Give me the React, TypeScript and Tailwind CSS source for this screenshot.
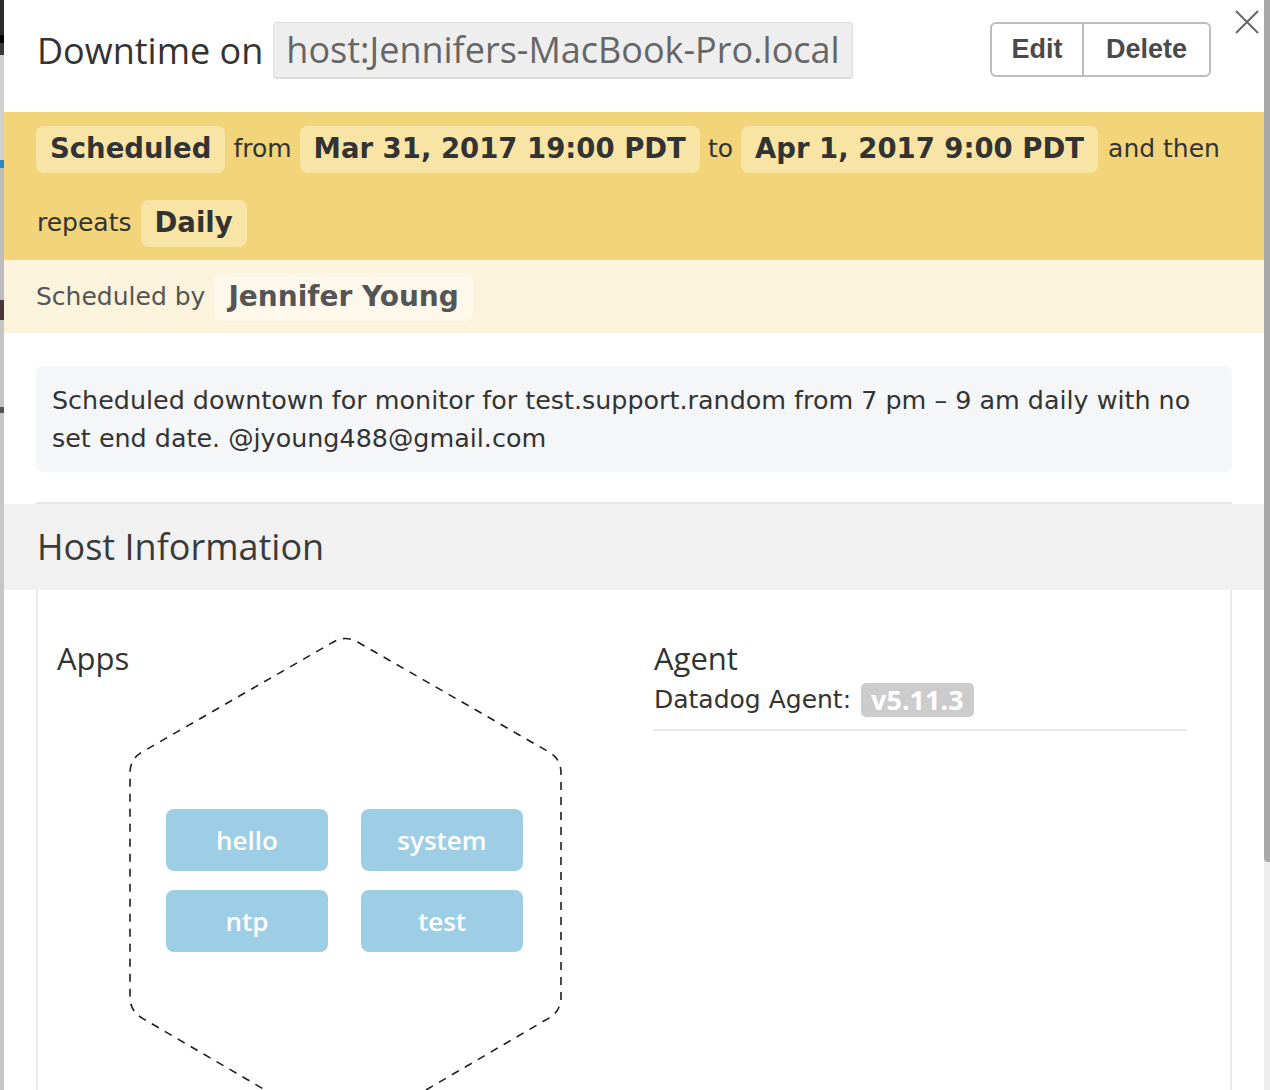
import React from "react";

const lucida = { fontFamily: '"DejaVu Sans", "Liberation Sans", sans-serif' };
const openSans = { fontFamily: '"Open Sans", "Noto Sans", sans-serif' };
const helv = { fontFamily: '"Liberation Sans", Arial, sans-serif' };

// rounded regular hexagon drawn behind the app chips
const Hexagon = () => (
  <svg
    className="absolute left-[90px] top-[43px]"
    width="436"
    height="506"
    viewBox="0 0 436 506"
    fill="none"
  >
    <path
      d="M229.6 9 L420.9 119 Q433 126 433 140 L433 364 Q433 378 420.9 385.1 L229.6 496.9 Q217.5 504 205.4 496.9 L14.1 385.1 Q2 378 2 364 L2 140 Q2 126 14.1 119 L205.4 9 Q217.5 2 229.6 9 Z"
      stroke="#1f1f1f"
      strokeWidth="1.6"
      strokeDasharray="8 7"
    />
  </svg>
);

const Pill = ({ children }: { children: React.ReactNode }) => (
  <span className="inline-flex h-[47px] shrink-0 items-center whitespace-nowrap rounded-lg bg-[#f8e5a6] px-[14px] text-[27.5px] font-bold text-[#333]">
    {children}
  </span>
);

const apps = ["hello", "system", "ntp", "test"];

export default function App() {
  return (
    <div className="flex h-[1090px] w-[1270px] overflow-hidden bg-white">
      {/* page behind the modal */}
      <div className="flex w-[4px] flex-col bg-[#c6c6c6]">
        <div className="h-[35px] bg-[#2b2b2b]" />
        <div className="h-[8px] bg-black" />
        <div className="h-[12px] bg-[#3a3a3a]" />
        <div className="h-[105px] bg-[#cfcfcf]" />
        <div className="h-[8px] bg-[#2f86c0]" />
        <div className="h-[132px] bg-[#bdbdbd]" />
        <div className="h-[20px] bg-[#4a3838]" />
        <div className="h-[87px] bg-[#c4c4c4]" />
        <div className="h-[6px] bg-[#555]" />
      </div>

      <div className="relative flex w-[1260px] flex-col">
        {/* header */}
        <div className="flex h-[112px] items-start pl-[33px] pr-[53px] pt-[22px]">
          <div className="flex h-[57px] items-center text-[36px] text-[#333]" style={openSans}>
            Downtime on
          </div>
          <div
            className="ml-[10px] flex h-[57px] items-center rounded-[4px] border border-b-2 border-[#dcdcdc] bg-[#eeeeee] px-[12px] text-[36px] text-[#666]"
            style={openSans}
          >
            host:Jennifers-MacBook-Pro.local
          </div>
          <div
            className="ml-auto flex h-[55px] overflow-hidden rounded-[6px] border-2 border-[#bdbdbd] text-[27px] font-bold text-[#4a4a4a]"
            style={helv}
          >
            <button className="w-[92px] border-r-2 border-[#bdbdbd]">Edit</button>
            <button className="w-[125px]">Delete</button>
          </div>
        </div>
        <button className="absolute right-[5px] top-[10px] h-[24px] w-[24px]">
          <svg viewBox="0 0 24 24" width="24" height="24" stroke="#666" strokeWidth="2">
            <path d="M1 1 L23 23 M23 1 L1 23" />
          </svg>
        </button>

        {/* schedule band */}
        <div className="bg-[#f2d47a] px-[32px] text-[#333]" style={lucida}>
          <div className="flex h-[74px] items-center gap-x-[8px] whitespace-nowrap text-[25px]">
            <Pill>Scheduled</Pill>
            <span>from</span>
            <Pill>Mar 31, 2017 19:00 PDT</Pill>
            <span>to</span>
            <Pill>Apr 1, 2017 9:00 PDT</Pill>
            <span className="ml-[2px]">and then</span>
          </div>
          <div className="flex h-[74px] items-center gap-x-[9px] text-[25px]">
            <span className="pl-[1px]">repeats</span>
            <Pill>Daily</Pill>
          </div>
        </div>

        {/* scheduled by */}
        <div className="flex h-[73px] items-center gap-x-[9px] bg-[#fcf3dc] px-[32px]" style={lucida}>
          <span className="text-[25px] text-[#555]">Scheduled by</span>
          <span className="inline-flex h-[48px] items-center whitespace-nowrap rounded-lg bg-[#fef8ea] px-[14px] text-[28px] font-bold text-[#555]">
            Jennifer Young
          </span>
        </div>

        {/* message */}
        <div className="px-[32px] pt-[33px]">
          <div
            className="rounded-[6px] bg-[#f5f6f7] px-[16px] py-[15px] text-[25.4px] leading-[38px] text-[#333]"
            style={lucida}
          >
            Scheduled downtown for monitor for test.support.random from 7 pm – 9 am daily with no set end date.
            @jyoung488@gmail.com
          </div>
        </div>

        {/* host information */}
        <div className="mx-[32px] mt-[30px] h-[2px] border-t-2 border-[#e6e6e6]" />
        <div className="flex h-[86px] items-center bg-[#f1f1f1] px-[33px] text-[36px] text-[#3a3a3a]" style={openSans}>
          Host Information
        </div>
        <div className="relative mx-[32px] flex flex-1 border-x-2 border-[#ebebeb]">
          <Hexagon />
          <div className="relative w-[616px] pl-[19px] pt-[47px]">
            <div className="text-[31px] leading-[42px] text-[#333]" style={openSans}>
              Apps
            </div>
            <div className="ml-[109px] mt-[130px] grid w-[357px] grid-cols-2 gap-x-[33px] gap-y-[19px]">
              {apps.map((app) => (
                <div
                  key={app}
                  className="flex h-[62px] items-center justify-center rounded-[8px] bg-[#9dcee6] text-[26px] font-semibold text-white"
                  style={openSans}
                >
                  {app}
                </div>
              ))}
            </div>
          </div>
          <div className="w-[532px] pt-[47px]">
            <div className="text-[31px] leading-[42px] text-[#333]" style={openSans}>
              Agent
            </div>
            <div className="mt-[4px] flex h-[34px] items-center gap-x-[10px]">
              <span className="text-[25px] text-[#333]" style={lucida}>
                Datadog Agent:
              </span>
              <span
                className="flex h-[34px] items-center rounded-[5px] bg-[#cccccc] px-[10px] text-[27px] font-bold text-white"
                style={openSans}
              >
                v5.11.3
              </span>
            </div>
            <div className="mt-[12px] h-[2px] bg-[#e6e6e6]" />
          </div>
        </div>
      </div>

      {/* scrollbar */}
      <div className="flex w-[6px] flex-col bg-[#eeeeee]">
        <div className="h-[862px] rounded-bl-[4px] bg-[#a9a9a9]" />
      </div>
    </div>
  );
}
